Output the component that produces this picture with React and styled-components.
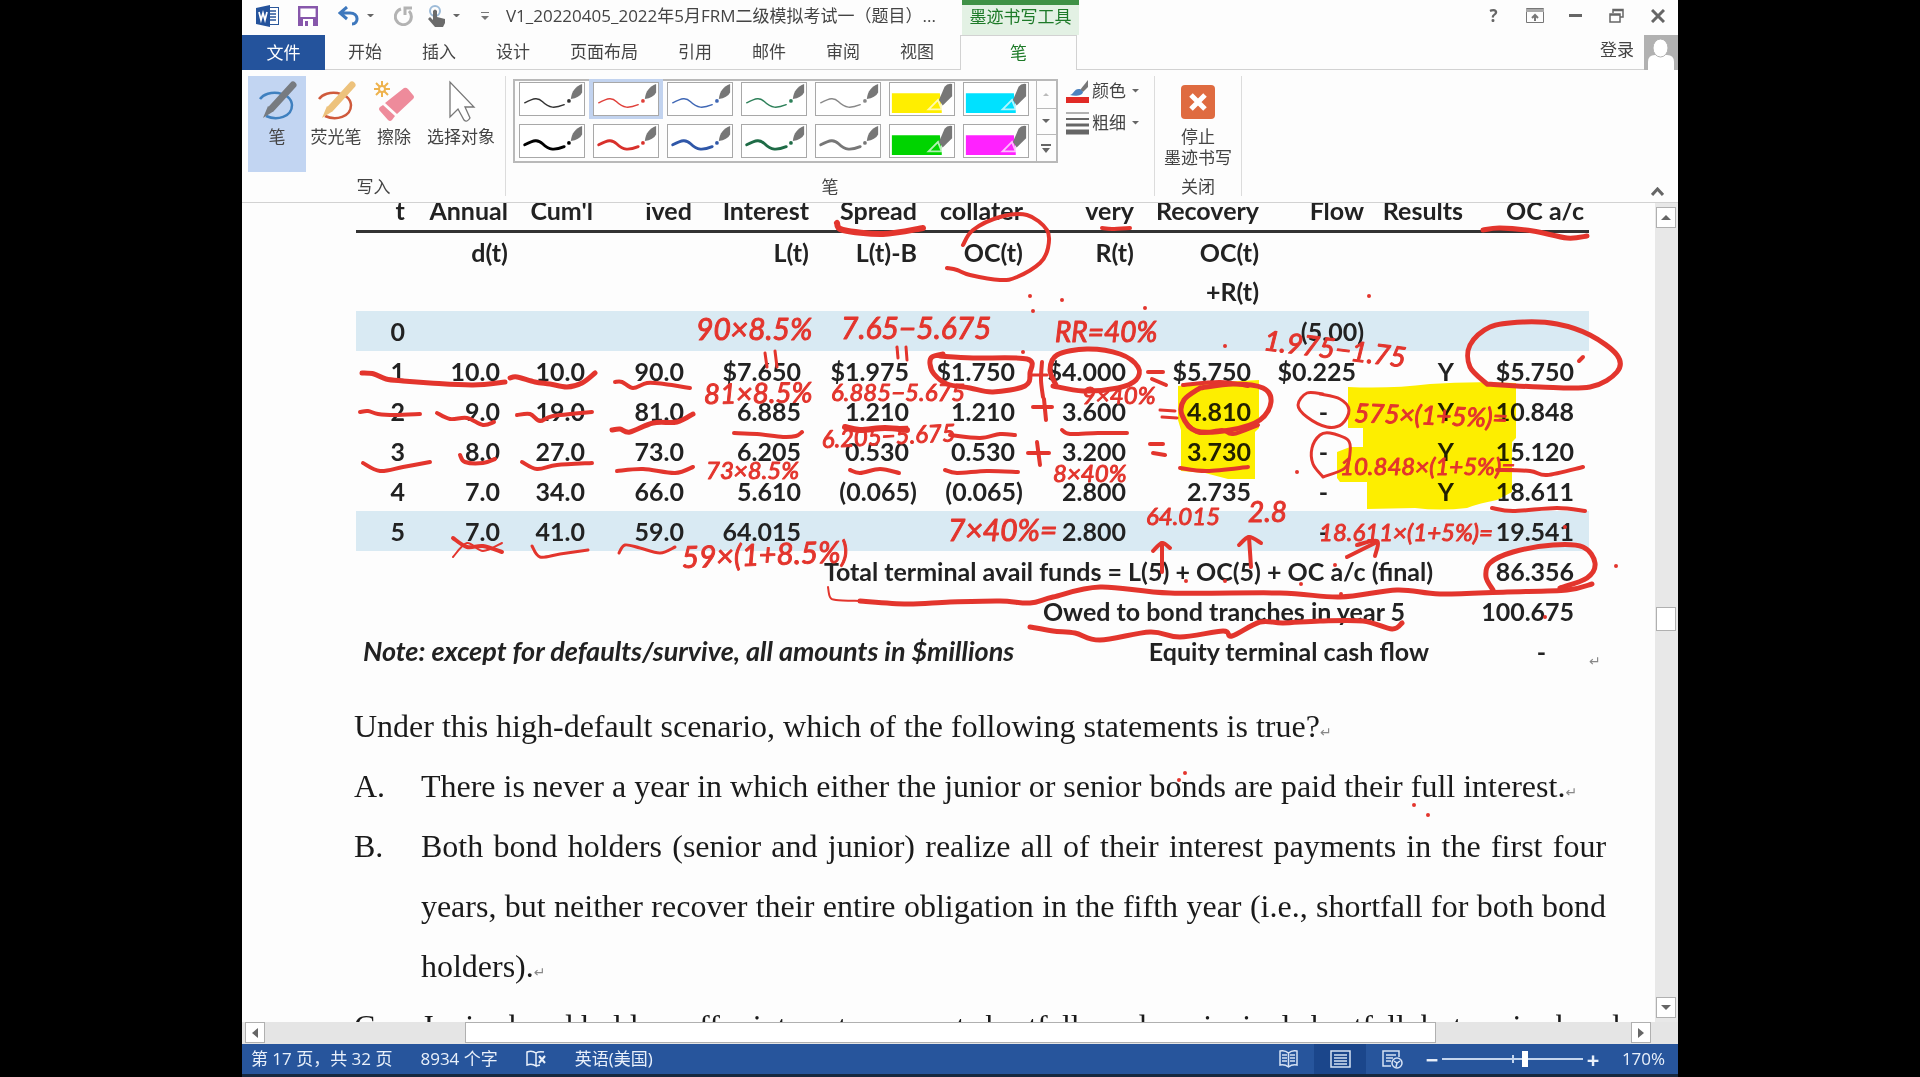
import React, { useState } from 'react';
import styled, { createGlobalStyle, css } from 'styled-components';

const GlobalStyle = createGlobalStyle`
  * {
    box-sizing: border-box;
  }
  html,
  body,
  #root {
    height: 100%;
    margin: 0;
  }
  body {
    background: #000;
    color: #444;
    font: 17px/24px 'Open Sans', 'Noto Sans CJK SC', sans-serif;
    overflow: hidden;
  }
  button {
    padding: 0;
    border: none;
    background: transparent;
    color: inherit;
    font: inherit;
    cursor: pointer;
  }
  svg {
    display: block;
  }
`;

const Screen = styled.div`
  display: flex;
  height: 100vh;
  padding: 0 12.6%;
`;

const Window = styled.div`
  display: flex;
  flex: 1;
  flex-direction: column;
  min-width: 0;
  background: #fdfdfd;
  border-bottom: 3px solid #16283f;
`;

/* ---------- title bar ---------- */

const TitleBar = styled.header`
  display: flex;
  height: 35px;
  flex: none;
`;

const QuickAccess = styled.div`
  display: flex;
  align-items: center;
  width: 720px;
  padding: 0 0 4px 14px;
`;

const QuickButton = styled.button`
  display: flex;
  align-items: center;
  justify-content: center;
  width: ${props => props.$width}px;
  height: 24px;
`;

const DocTitle = styled.span`
  margin-left: 4px;
  white-space: nowrap;
`;

const ContextTitle = styled.div`
  width: 117px;
  border-top: 5px solid #3f9146;
  background: #e3f1e4;
  color: #1d7a28;
  text-align: center;
  white-space: nowrap;
`;

const WindowButtons = styled.div`
  display: flex;
  flex: 1;
  justify-content: flex-end;
  align-items: center;
  padding-bottom: 4px;

  button {
    display: flex;
    align-items: center;
    justify-content: center;
    width: 41px;
    height: 30px;
    color: #666;
    font-weight: 700;
  }
`;

/* ---------- tabs ---------- */

const TabBar = styled.nav`
  display: flex;
  flex: none;
  height: 35px;
`;

const Tab = styled.button`
  padding: 0 20px;
  border-bottom: 1px solid #d2d2d2;
  white-space: nowrap;
`;

const FileTab = styled(Tab)`
  width: 83px;
  border-bottom: none;
  background: #24539c;
  color: #fff;
`;

const ContextTab = styled(Tab)`
  width: 117px;
  border: 1px solid #d2d2d2;
  border-bottom: none;
  color: #1d7a28;
`;

const TabGap = styled.span`
  flex: ${props => (props.$width ? `0 0 ${props.$width}px` : 1)};
  border-bottom: 1px solid #d2d2d2;
`;

const SignIn = styled.button`
  padding: 0 10px 4px 0;
  border-bottom: 1px solid #d2d2d2;
`;

/* ---------- ribbon ---------- */

const Ribbon = styled.section`
  display: flex;
  flex: none;
  height: 133px;
  border-bottom: 1px solid #d2d2d2;
`;

const Group = styled.div`
  display: flex;
  flex: none;
  flex-direction: column;
  justify-content: space-between;
  width: ${props => props.$width}px;
  margin: 6px 0;
  border-right: 1px solid #dcdcdc;
`;

const GroupBody = styled.div`
  display: flex;
  height: 97px;
  padding-left: ${props => props.$inset || 0}px;
`;

const GroupLabel = styled.div`
  text-align: center;
  line-height: 18px;
`;

const BigButton = styled.button`
  display: flex;
  flex-direction: column;
  align-items: center;
  width: ${props => props.$width}px;
  height: 96px;
  padding-top: 4px;
  line-height: 21px;
  white-space: nowrap;
  ${props => props.$active && css`background: #c2d5f2;`}

  svg {
    height: 42px;
    margin-bottom: 4px;
  }
`;

const Gallery = styled.div`
  display: flex;
  width: 545px;
  height: 84px;
  margin-top: 3px;
  border: 2px solid #b9b9b9;
`;

const Swatches = styled.div`
  display: grid;
  flex: 1;
  grid-template-columns: repeat(7, 74px);
  grid-template-rows: 40px 40px;
  row-gap: 2px;
  margin-top: -2px;
`;

const Swatch = styled.button`
  display: flex;
  align-items: center;
  justify-content: center;
  ${props => props.$active && css`background: #c2d3ef;`}

  svg {
    border: 1px solid #a8a8a8;
    background: #fff;
  }
`;

const GalleryScroll = styled.div`
  display: grid;
  width: 20px;
  grid-template-rows: repeat(3, 1fr);
  border-left: 1px solid #b9b9b9;

  button {
    display: flex;
    align-items: center;
    justify-content: center;
  }
  button + button {
    border-top: 1px solid #b9b9b9;
  }
`;

const SmallButtons = styled.div`
  display: flex;
  flex-direction: column;
  gap: 8px;
  padding: 3px 0 0 8px;
`;

const SmallButton = styled.button`
  display: flex;
  align-items: center;
  height: 24px;
  white-space: nowrap;

  svg {
    margin-right: 3px;
  }
  svg:last-child {
    margin: 0 0 0 6px;
  }
`;

const RibbonEnd = styled.div`
  display: flex;
  flex: 1;
  align-items: flex-end;
  justify-content: flex-end;
  padding: 0 14px 6px 0;
`;

/* ---------- document ---------- */

const Workspace = styled.main`
  display: flex;
  flex: 1;
  min-height: 0;
`;

const Canvas = styled.div`
  position: relative;
  flex: 1;
  min-width: 0;
  overflow: hidden;
`;

/* the page is scrolled, so its first table row is cut by the ribbon */
const Page = styled.article`
  margin-top: -12px;
  padding: 0 49px 0 112px;
  color: #1a1a1a;
`;

const TableLine = styled.div`
  display: flex;
  align-items: flex-end;
  margin-bottom: 26px;
  padding-left: 2px;
`;

const CashFlows = styled.table`
  flex: 1;
  table-layout: fixed;
  border-collapse: collapse;
  color: #222;
  font: 700 25px/38px Lato, sans-serif;
  white-space: nowrap;

  tr {
    height: 40px;
  }
  th,
  td {
    padding: 0;
    text-align: right;
  }
  thead tr:first-child th {
    border-bottom: 3px solid #333;
  }
`;

const Row = styled.tr`
  background: ${props => (props.$shaded ? '#d9eaf3' : 'transparent')};
`;

const HeadCell = styled.th`
  && {
    padding-right: ${props => (props.$last ? 5 : 0)}px;
  }
`;

const Cell = styled.td`
  && {
    padding-right: ${props => props.$pad}px;
  }
`;

const NoteCell = styled.td`
  && {
    padding-left: 7px;
    font-size: 27px;
    font-style: italic;
    text-align: left;
  }
`;

const Mark = styled.span`
  flex: none;
  width: 17px;
  color: #888;
  font: 14px/20px 'DejaVu Sans', sans-serif;
`;

const Question = styled.p`
  margin: 0;
  font: 32px/59px 'Liberation Serif', serif;
`;

const Options = styled.dl`
  display: grid;
  grid-template-columns: 67px 1fr;
  margin: 0;
  font: 32px/60px 'Liberation Serif', serif;

  dd {
    min-width: 0;
    margin: 0;
    text-align: justify;
  }
  dd:last-child {
    white-space: nowrap;
  }
`;

/* pen strokes float over the page */
const InkLayer = styled.svg`
  position: absolute;
  top: 0;
  left: 0;
  fill: none;
  stroke: #e3352d;
  stroke-linecap: round;
  stroke-linejoin: round;
  pointer-events: none;
`;

const HighlightLayer = styled(InkLayer)`
  fill: #fff000;
  stroke: none;
  mix-blend-mode: multiply;
`;

const InkText = styled.text`
  fill: #e3352d;
  stroke-width: 1px;
  font: italic ${props => props.$size}px Lato, sans-serif;
`;

/* ---------- scroll bars ---------- */

const VScroll = styled.div`
  display: flex;
  flex-direction: column;
  width: 23px;
  padding: 4px 2px 4px 1px;
  background: #e8e8e8;
`;

const HScroll = styled.div`
  display: flex;
  flex: none;
  height: 22px;
  padding: 0 27px 1px 3px;
  background: #e5e5e5;
`;

const ScrollButton = styled.button`
  display: flex;
  flex: none;
  align-items: center;
  justify-content: center;
  width: 20px;
  height: 21px;
  border: 1px solid #b0b0b0;
  background: #fff;
`;

const Spacer = styled.span`
  flex: ${props => props.$grow};
`;

const Thumb = styled.span`
  flex: ${props => props.$grow || 'none'};
  height: ${props => (props.$grow ? 21 : 24)}px;
  border: 1px solid #b0b0b0;
  background: #fff;
`;

/* ---------- status bar ---------- */

const StatusBar = styled.footer`
  display: flex;
  flex: none;
  align-items: center;
  height: 30px;
  padding: 0 13px 0 9px;
  background: #27559c;
  color: #e9f0fa;
  white-space: nowrap;
`;

const StatusItem = styled.span`
  margin-right: 28px;
`;

const ViewButton = styled.button`
  display: flex;
  align-items: center;
  justify-content: center;
  width: 52px;
  height: 30px;
  background: ${props => (props.$active ? '#1b468b' : 'transparent')};
`;

const ZoomButton = styled.button`
  width: 20px;
  font-size: 22px;
  font-weight: 700;
`;

const Zoom = styled.input`
  width: 141px;
  height: 20px;
  margin: 0;
  appearance: none;
  background: linear-gradient(#c4d5ee, #c4d5ee) 0 50% / 100% 2px no-repeat,
    linear-gradient(#c4d5ee, #c4d5ee) 50% 50% / 2px 8px no-repeat;

  &::-webkit-slider-thumb {
    width: 6px;
    height: 16px;
    appearance: none;
    background: #fff;
  }
`;

const ZoomTools = styled.div`
  display: flex;
  align-items: center;
  margin-left: 4px;
`;

const ZoomLevel = styled.output`
  width: 62px;
  text-align: right;
`;

/* ---------- icons ---------- */

const Caret = ({ up, color = '#666', size = 8 }) => (
  <svg width={size} height={size / 2} viewBox="0 0 8 4">
    <path d={up ? 'M0 4L4 0L8 4Z' : 'M0 0H8L4 4Z'} fill={color} />
  </svg>
);

const WordIcon = () => (
  <svg width="24" height="22" viewBox="0 0 24 22">
    <rect x="10.500" y="2.500" width="12" height="17" fill="#fff" stroke="#2b579a" />
    <path d="M14 6h6M14 9h6M14 12h6M14 15h6" stroke="#2b579a" strokeWidth="1.500" />
    <path d="M0 3L14 0V22L0 19Z" fill="#24539c" />
    <path d="M3 7l2 8 2-7 2 7 2-8" fill="none" stroke="#fff" strokeWidth="1.700" />
  </svg>
);

const SaveIcon = () => (
  <svg width="20" height="20" viewBox="0 0 20 20">
    <path d="M1.200 1.200H18.800V18.800H1.200Z" fill="#fff" stroke="#8757ab" strokeWidth="2.400" />
    <path d="M1 11h18v8H1z" fill="#8757ab" />
    <path d="M5 13h10v7H5z" fill="#fff" />
    <path d="M7 15h3v5H7z" fill="#8757ab" />
  </svg>
);

const UndoIcon = () => (
  <svg width="22" height="20" viewBox="0 0 22 20" fill="none" stroke="#3e78bd" strokeWidth="3">
    <path d="M9 1L2 7l7 6M3 7h9c9 0 9 11 2 11" />
  </svg>
);

const RedoIcon = () => (
  <svg width="20" height="20" viewBox="0 0 20 20" fill="none" stroke="#b3b3b3" strokeWidth="3">
    <path d="M7 3a8 8 0 1 0 8 2M11 9V2h7" />
  </svg>
);

const TouchIcon = () => (
  <svg width="18" height="22" viewBox="0 0 18 22">
    <circle cx="7" cy="6" r="5" fill="none" stroke="#9dbbd8" strokeWidth="2" />
    <path d="M5 6q2-3 4 0v6l8 2v4l-2 4H7L0 14l2-2 3 3z" fill="#6b6b6b" />
  </svg>
);

const PenIcon = ({ body, loop }) => (
  <svg width="40" height="40" viewBox="0 0 40 40" fill="none">
    <path d="M3 18C10 8 34 10 35 24C35 36 20 40 9 35" stroke={loop} strokeWidth="2.500" />
    <path d="M36 4L15 27" stroke={body} strokeWidth="7" strokeLinecap="round" />
    <path d="M11 25l6 5-11 7z" fill={body} />
  </svg>
);

const EraserIcon = () => (
  <svg width="42" height="42" viewBox="0 0 42 42">
    <path
      d="M9 1v16M1 9h16M3 3l12 12M15 3L3 15"
      stroke="#eeb34e"
      strokeWidth="2"
    />
    <circle cx="9" cy="9" r="3" fill="#fff" stroke="#eeb34e" strokeWidth="2" />
    <path d="M31 8q2-1 4 1l5 6q2 2 0 4L24 34 12 23Z" fill="#ee8b9b" />
    <path d="M10 25l12 11-3 4q-2 2-4 0L7 31q-2-2 0-4z" fill="#ee8b9b" />
  </svg>
);

const PointerIcon = () => (
  <svg width="40" height="42" viewBox="0 0 40 42">
    <path
      d="M9 2V37L17 29L23 40Q26 43 29 38L24 27H33Z"
      fill="#fff"
      stroke="#777"
      strokeWidth="1.300"
    />
  </svg>
);

const PenSwatch = ({ color, bold }) => (
  <svg width="66" height="34" viewBox="0 0 66 34">
    <path
      d="M4 21C14 16 18 15 23 20C30 27 36 27 46 23"
      fill="none"
      stroke={color}
      strokeWidth={bold ? 3 : 1.5}
      strokeLinecap="round"
    />
    <circle cx="51" cy="19" r="2" fill={color} />
    <path d="M53 17C54 8 58 4 65 1V10C63 14 59 16 53 17Z" fill="#777" />
  </svg>
);

const MarkerSwatch = ({ color }) => (
  <svg width="66" height="34" viewBox="0 0 66 34">
    <path d="M1 11H52L54 28V32H1Z" fill={color} />
    <path d="M40 28L50 18L54 28Z" fill={color} stroke="#fff" strokeOpacity="0.700" strokeWidth="2" />
    <path d="M51 18L57 4Q60 0 65 1V14L55 24Z" fill="#777" />
  </svg>
);

const ColorIcon = () => (
  <svg width="23" height="23" viewBox="0 0 23 23">
    <path d="M14 10L22 0V7L17 12Z" fill="#777" />
    <path d="M4 15C8 14 8 8 14 9L17 12C17 15 10 17 4 15Z" fill="#4c82bf" />
    <path d="M0 17h23v6H0z" fill="#e12a26" />
  </svg>
);

const WeightIcon = () => (
  <svg width="23" height="23" viewBox="0 0 23 23" stroke="#666">
    <path d="M0 1h23" />
    <path d="M0 7h23" strokeWidth="2" />
    <path d="M0 13h23" strokeWidth="3" />
    <path d="M0 20h23" strokeWidth="5" />
  </svg>
);

const StopIcon = () => (
  <svg width="34" height="42" viewBox="0 0 34 42">
    <rect y="5" width="34" height="34" rx="4" fill="#df6b40" />
    <path d="M10 15L24 29M24 15L10 29" stroke="#fff" strokeWidth="5" />
  </svg>
);

const RibbonDisplayIcon = () => (
  <svg width="18" height="15" viewBox="0 0 18 15" fill="none" stroke="#777">
    <path d="M0.500 0.500H17.500V14.500H0.500Z" />
    <path d="M0 2.500H18" strokeWidth="3" stroke="#aaa" />
    <path d="M9 13V7M6 10l3-3 3 3" strokeWidth="2" />
  </svg>
);

const RestoreIcon = () => (
  <svg width="15" height="15" viewBox="0 0 15 15" fill="none" stroke="#666" strokeWidth="1.500">
    <path d="M4 5V1.500H14V9H11M4 2.500h10" />
    <path d="M1 6H11V14H1ZM1 7h10" />
  </svg>
);

const CloseIcon = () => (
  <svg width="14" height="14" viewBox="0 0 14 14" stroke="#666" strokeWidth="3">
    <path d="M1 1L13 13M13 1L1 13" />
  </svg>
);

const Avatar = () => (
  <svg width="34" height="35" viewBox="0 0 34 35">
    <path d="M0 0H34V35H0Z" fill="#b1b1b1" />
    <path d="M4 35V27Q4 20 11 20H23Q30 20 30 27V35Z" fill="#fff" />
    <ellipse cx="16.500" cy="13" rx="7.500" ry="9" fill="#fff" stroke="#b1b1b1" />
  </svg>
);

const ProofIcon = () => (
  <svg width="21" height="18" viewBox="0 0 21 18" fill="none" stroke="#e9f0fa" strokeWidth="1.500">
    <path d="M10 3Q6 0 1 2V15Q6 13 10 16V3Q13 1 18 2M10 16l4-1" />
    <path d="M13 6l6 7M19 6l-6 7" strokeWidth="2" />
  </svg>
);

const ReadIcon = () => (
  <svg width="19" height="18" viewBox="0 0 19 18" fill="none" stroke="#d6e2f4" strokeWidth="1.500">
    <path d="M9.500 3Q6 0 1 1V15Q6 14 9.500 17Q13 14 18 15V1Q13 0 9.500 3V17M3 5h5M3 8h5M3 11h5M11 5h5M11 8h5M11 11h5" />
  </svg>
);

const PrintIcon = () => (
  <svg width="21" height="18" viewBox="0 0 21 18" fill="none" stroke="#d6e2f4" strokeWidth="1.500">
    <path d="M1 1H20V17H1ZM4 5h13M4 8h13M4 11h13M4 14h13" />
  </svg>
);

const WebIcon = () => (
  <svg width="21" height="19" viewBox="0 0 21 19" fill="none" stroke="#d6e2f4" strokeWidth="1.500">
    <path d="M9 16H1V1H17V7M4 5h10M4 8h7M4 11h5" />
    <circle cx="15" cy="13" r="5" />
    <path d="M12 11l3 2 3-2M15 13l-1 4" />
  </svg>
);

/* ---------- data ---------- */

const TABS = ['开始', '插入', '设计', '页面布局', '引用', '邮件', '审阅', '视图'];

const PENS = [
  { color: '#333' },
  { color: '#e0403a' },
  { color: '#3f67b5' },
  { color: '#2d8059' },
  { color: '#888' },
  { color: '#ffee00', marker: true },
  { color: '#00e1ff', marker: true },
  { color: '#000', bold: true },
  { color: '#d8302b', bold: true },
  { color: '#2f57a8', bold: true },
  { color: '#1e6b46', bold: true },
  { color: '#777', bold: true },
  { color: '#00d400', marker: true },
  { color: '#ff22ff', marker: true },
];

const COLUMNS = [49, 103, 85, 99, 117, 108, 106, 111, 125, 105, 99, 126];

const HEAD = [
  ['t', 'Annual', "Cum'l", 'ived', 'Interest', 'Spread', 'collater', 'very', 'Recovery', 'Flow', 'Results', 'OC a/c'],
  ['', 'd(t)', '', '', 'L(t)', 'L(t)-B', 'OC(t)', 'R(t)', 'OC(t)', '', '', ''],
  ['', '', '', '', '', '', '', '', '+R(t)', '', '', ''],
];

const ROWS = [
  ['0', '', '', '', '', '', '', '', '', '(5.00)', '', ''],
  ['1', '10.0', '10.0', '90.0', '$7.650', '$1.975', '$1.750', '$4.000', '$5.750', '$0.225', 'Y', '$5.750'],
  ['2', '9.0', '19.0', '81.0', '6.885', '1.210', '1.210', '3.600', '4.810', '-', 'Y', '10.848'],
  ['3', '8.0', '27.0', '73.0', '6.205', '0.530', '0.530', '3.200', '3.730', '-', 'Y', '15.120'],
  ['4', '7.0', '34.0', '66.0', '5.610', '(0.065)', '(0.065)', '2.800', '2.735', '-', 'Y', '18.611'],
  ['5', '7.0', '41.0', '59.0', '64.015', '', '', '2.800', '', '-', '', '19.541'],
];

// brackets hang in the space that is kept right of a positive number
const cellPad = (text, col) => {
  if (col === 0) return 0;
  if (text === '-') return 36;
  const pad = text.endsWith(')') ? 0 : 8;
  return col === 11 ? pad + 7 : pad;
};

const INK = [
  // underlines of the default columns
  { w: 5, p: [362, 373, 374, 374, 386, 379, 403, 381, 430, 383, 473, 385, 505, 382] },
  { w: 5, p: [510, 378, 517, 377, 535, 382, 550, 384, 567, 387, 582, 383, 595, 373] },
  { w: 4, p: [615, 382, 622, 382, 633, 388, 647, 383, 664, 384, 690, 388] },
  { w: 4, p: [360, 412, 368, 411, 378, 414, 395, 415, 420, 414] },
  { w: 4, p: [437, 413, 450, 419, 467, 418, 483, 425, 494, 422] },
  { w: 4, p: [517, 415, 530, 414, 540, 421, 553, 416, 592, 412] },
  { w: 5, p: [612, 430, 620, 429, 630, 432, 653, 423, 677, 422, 693, 414] },
  { w: 4, p: [734, 433, 757, 434, 783, 437, 796, 436, 802, 432] },
  { w: 4, p: [363, 463, 380, 471, 403, 467, 430, 462] },
  { w: 4, p: [460, 455, 465, 462, 483, 463, 495, 459] },
  { w: 4, p: [522, 462, 537, 469, 557, 465, 592, 463] },
  { w: 4, p: [617, 471, 643, 469, 675, 473, 693, 467] },
  { w: 4, p: [453, 538, 467, 547, 483, 546, 502, 552] },
  { w: 2, p: [453, 557, 467, 543, 483, 551, 502, 543] },
  { w: 3, p: [532, 546, 540, 557, 560, 554, 588, 550] },
  { w: 3, p: [619, 553, 625, 545, 640, 548, 660, 553, 675, 547] },
  // header marks
  { w: 6, p: [837, 223, 843, 230, 883, 234, 923, 228] },
  { w: 4, p: [963, 245, 973, 230, 1000, 217, 1027, 215, 1047, 230, 1048, 248, 1040, 263, 1017, 277, 1000, 280, 970, 275, 957, 270, 947, 268] },
  { w: 4, p: [1102, 228, 1112, 229, 1130, 228] },
  { w: 5, p: [1483, 230, 1500, 228, 1533, 231, 1567, 238, 1587, 236] },
  // row 1
  { w: 5, p: [943, 354, 932, 357, 930, 364, 934, 374, 947, 384, 970, 388, 993, 392, 1025, 386, 1030, 373, 1027, 359, 973, 358, 940, 356] },
  { w: 3, p: [1030, 375, 1047, 375] },
  { w: 4, p: [1042, 362, 1041, 380, 1043, 397] },
  { w: 5, p: [1056, 385, 1050, 370, 1057, 355, 1087, 349, 1120, 354, 1138, 367, 1136, 380, 1118, 388, 1083, 391, 1053, 386] },
  { w: 4, p: [1148, 372, 1163, 372] },
  { w: 4, p: [1152, 379, 1166, 385] },
  { w: 4, p: [1183, 385, 1220, 382, 1248, 386] },
  { w: 3, p: [765, 353, 767, 367] },
  { w: 3, p: [775, 351, 777, 367] },
  { w: 3, p: [897, 347, 898, 358] },
  { w: 3, p: [906, 347, 907, 360] },
  { w: 5, p: [1487, 384, 1470, 367, 1470, 345, 1490, 327, 1523, 322, 1557, 324, 1590, 335, 1617, 355, 1617, 372, 1590, 387, 1540, 387, 1487, 384] },
  { w: 4, p: [1579, 361, 1583, 357] },
  // row 2
  { w: 4, p: [1033, 407, 1052, 407] },
  { w: 4, p: [1044, 399, 1046, 420] },
  { w: 3, p: [1160, 410, 1175, 411] },
  { w: 3, p: [1162, 417, 1177, 418] },
  { w: 5, p: [1200, 388, 1184, 400, 1182, 415, 1196, 431, 1230, 430, 1260, 420, 1271, 402, 1263, 388, 1233, 384, 1200, 388] },
  { w: 4, p: [1187, 424, 1200, 433, 1222, 430, 1233, 434, 1258, 425] },
  { w: 3, p: [1323, 394, 1307, 393, 1298, 405, 1307, 417, 1327, 427, 1342, 424, 1349, 410, 1340, 399, 1320, 394] },
  { w: 6, p: [845, 427, 860, 430, 885, 428, 907, 430] },
  { w: 4, p: [950, 435, 980, 438, 1000, 434, 1015, 435] },
  { w: 4, p: [1062, 430, 1070, 434, 1098, 433, 1127, 433] },
  // row 3
  { w: 4, p: [1028, 453, 1049, 453] },
  { w: 4, p: [1037, 442, 1040, 465] },
  { w: 4, p: [1150, 444, 1163, 444] },
  { w: 4, p: [1153, 453, 1165, 455] },
  { w: 4, p: [850, 470, 860, 473, 880, 469, 899, 473] },
  { w: 4, p: [945, 470, 957, 473, 987, 471, 1018, 472] },
  { w: 4, p: [1180, 468, 1207, 471, 1248, 467] },
  { w: 3, p: [1323, 477, 1313, 464, 1312, 448, 1320, 435, 1330, 433, 1348, 440, 1350, 453, 1345, 468, 1323, 477] },
  { w: 4, p: [1497, 470, 1530, 471, 1547, 475, 1583, 467] },
  { w: 4, p: [1492, 508, 1513, 511, 1557, 508, 1585, 511] },
  // arrows
  { w: 4, p: [1162, 572, 1162, 543] },
  { w: 4, p: [1153, 551, 1162, 543, 1170, 548] },
  { w: 4, p: [1251, 567, 1249, 537] },
  { w: 4, p: [1239, 545, 1249, 537, 1261, 543] },
  { w: 4, p: [1347, 557, 1377, 542] },
  { w: 4, p: [1357, 545, 1377, 541, 1375, 556] },
  // totals
  { w: 5, p: [1493, 590, 1486, 577, 1490, 563, 1513, 552, 1553, 545, 1583, 547, 1595, 563, 1587, 578, 1560, 588] },
  { w: 2, p: [828, 587, 830, 597, 836, 600, 860, 601] },
  { w: 5, p: [860, 601, 907, 604, 950, 602, 1000, 601, 1030, 603, 1053, 597, 1100, 587, 1170, 593, 1280, 593, 1340, 597, 1397, 590, 1440, 594, 1507, 592, 1567, 590, 1592, 584] },
  { w: 5, p: [1030, 627, 1053, 631, 1075, 633, 1100, 640, 1150, 632, 1180, 637, 1223, 631, 1232, 636, 1260, 622, 1283, 623, 1320, 621, 1363, 621, 1392, 629, 1402, 623] },
];

const DOTS = [
  [1030, 296], [1033, 311], [1062, 300], [1145, 308], [1225, 346], [1023, 352], [1369, 296],
  [1616, 566], [1301, 584], [1341, 594], [1297, 472], [1565, 527], [1186, 581], [1225, 581],
  [1335, 565], [1545, 617], [1179, 780], [1185, 773], [1414, 805], [1428, 815],
];

const WRITING = [
  { x: 696, y: 340, size: 30, text: '90×8.5%' },
  { x: 841, y: 339, size: 30, text: '7.65−5.675' },
  { x: 1055, y: 342, size: 28, text: 'RR=40%' },
  { x: 1263, y: 350, size: 28, turn: 7, text: '1.975−1.75' },
  { x: 704, y: 404, size: 28, turn: -1, text: '81×8.5%' },
  { x: 831, y: 401, size: 24, text: '6.885−5.675' },
  { x: 1082, y: 404, size: 24, text: '9×40%' },
  { x: 822, y: 448, size: 24, turn: -3, text: '6.205−5.675' },
  { x: 706, y: 479, size: 24, text: '73×8.5%' },
  { x: 1053, y: 482, size: 24, text: '8×40%' },
  { x: 948, y: 541, size: 30, text: '7×40%=' },
  { x: 1146, y: 525, size: 24, text: '64.015' },
  { x: 1248, y: 522, size: 28, text: '2.8' },
  { x: 1354, y: 422, size: 26, turn: 2, text: '575×(1+5%)=' },
  { x: 1340, y: 475, size: 24, text: '10.848×(1+5%)=' },
  { x: 1319, y: 541, size: 24, text: '18.611×(1+5%)=' },
  { x: 682, y: 568, size: 30, turn: -2, text: '59×(1+8.5%)' },
];

// one smooth curve through a flat list of points
const smooth = flat => {
  const pts = [];
  for (let i = 0; i < flat.length; i += 2) pts.push([flat[i], flat[i + 1]]);
  let d = `M${pts[0]}`;
  for (let i = 0; i < pts.length - 1; i++) {
    const a = pts[i - 1] || pts[i];
    const b = pts[i];
    const c = pts[i + 1];
    const e = pts[i + 2] || c;
    d += `C${b[0] + (c[0] - a[0]) / 6},${b[1] + (c[1] - a[1]) / 6} ${c[0] - (e[0] - b[0]) / 6},${c[1] - (e[1] - b[1]) / 6} ${c}`;
  }
  return d;
};

/* ---------- parts ---------- */

const Ink = () => {
  const frame = { width: 1413, height: 820, viewBox: '242 203 1413 820' };
  return (
    <>
      <HighlightLayer {...frame}>
        <path d="M1178 386L1200 383L1259 380V428L1255 432V479H1228L1205 473L1181 471V430L1178 420Z" />
        <path d="M1348 387Q1390 389 1430 384Q1470 381 1516 383V438L1512 442V492L1497 500Q1480 503 1467 508Q1440 511 1415 508L1367 509V482H1340L1337 478V452L1350 447H1363V428H1348Z" />
      </HighlightLayer>
      <InkLayer {...frame}>
        {INK.map((stroke, i) => (
          <path key={i} d={smooth(stroke.p)} strokeWidth={stroke.w} />
        ))}
        {DOTS.map(([x, y], i) => (
          <circle key={i} cx={x} cy={y} r="1" strokeWidth="2" />
        ))}
        {WRITING.map(line => (
          <InkText
            key={line.text}
            $size={line.size}
            x={line.x}
            y={line.y}
            transform={line.turn ? `rotate(${line.turn} ${line.x} ${line.y})` : undefined}
          >
            {line.text}
          </InkText>
        ))}
      </InkLayer>
    </>
  );
};

const CashFlowTable = () => (
  <CashFlows>
    <colgroup>
      {COLUMNS.map((width, i) => (
        <col key={i} width={width} />
      ))}
    </colgroup>
    <thead>
      {HEAD.map((cells, r) => (
        <tr key={r}>
          {cells.map((text, c) => (
            <HeadCell key={c} $last={c === 11}>{text}</HeadCell>
          ))}
        </tr>
      ))}
    </thead>
    <tbody>
      {ROWS.map((cells, r) => (
        <Row key={r} $shaded={r === 0 || r === 5}>
          {cells.map((text, c) => (
            <Cell key={c} $pad={c === 10 ? 9 : cellPad(text, c)}>{text}</Cell>
          ))}
        </Row>
      ))}
      <Row>
        <Cell colSpan={11} $pad={30}>Total terminal avail funds = L(5) + OC(5) + OC a/c (final)</Cell>
        <Cell $pad={15}>86.356</Cell>
      </Row>
      <Row>
        <Cell colSpan={11} $pad={58}>Owed to bond tranches in year 5</Cell>
        <Cell $pad={15}>100.675</Cell>
      </Row>
      <Row>
        <NoteCell colSpan={7}>Note: except for defaults/survive, all amounts in $millions</NoteCell>
        <Cell colSpan={4} $pad={34}>Equity terminal cash flow</Cell>
        <Cell $pad={43}>-</Cell>
      </Row>
    </tbody>
  </CashFlows>
);

const PenRibbon = () => {
  const [pen, setPen] = useState(1);

  return (
    <Ribbon>
      <Group $width={264}>
        <GroupBody $inset={6}>
          <BigButton $width={58} $active><PenIcon body="#777b80" loop="#3f80bf" />笔</BigButton>
          <BigButton $width={60}><PenIcon body="#edc27c" loop="#cf5a3c" />荧光笔</BigButton>
          <BigButton $width={56}><EraserIcon />擦除</BigButton>
          <BigButton $width={78}><PointerIcon />选择对象</BigButton>
        </GroupBody>
        <GroupLabel>写入</GroupLabel>
      </Group>
      <Group $width={649}>
        <GroupBody $inset={7}>
          <Gallery>
            <Swatches>
              {PENS.map((item, i) => (
                <Swatch key={i} $active={i === pen} onClick={() => setPen(i)} aria-label={`pen ${i + 1}`}>
                  {item.marker ? <MarkerSwatch color={item.color} /> : <PenSwatch {...item} />}
                </Swatch>
              ))}
            </Swatches>
            <GalleryScroll>
              <button aria-label="上一行"><Caret up color="#bbb" size={6} /></button>
              <button aria-label="下一行"><Caret /></button>
              <button aria-label="更多">
                <svg width="10" height="9" viewBox="0 0 10 9">
                  <path d="M0 0H10V2H0ZM1 4H9L5 9Z" fill="#666" />
                </svg>
              </button>
            </GalleryScroll>
          </Gallery>
          <SmallButtons>
            <SmallButton><ColorIcon />颜色<Caret size={7} /></SmallButton>
            <SmallButton><WeightIcon />粗细<Caret size={7} /></SmallButton>
          </SmallButtons>
        </GroupBody>
        <GroupLabel>笔</GroupLabel>
      </Group>
      <Group $width={87}>
        <GroupBody>
          <BigButton $width={86}>
            <StopIcon />
            <span>停止<br />墨迹书写</span>
          </BigButton>
        </GroupBody>
        <GroupLabel>关闭</GroupLabel>
      </Group>
      <RibbonEnd>
        <button aria-label="折叠功能区">
          <svg width="13" height="9" viewBox="0 0 13 9" fill="none" stroke="#666" strokeWidth="3">
            <path d="M1 8L6.500 2L12 8" />
          </svg>
        </button>
      </RibbonEnd>
    </Ribbon>
  );
};

const App = () => {
  const [zoom, setZoom] = useState(59);

  return (
    <Screen>
      <GlobalStyle />
      <Window>
        <TitleBar>
          <QuickAccess>
            <WordIcon />
            <QuickButton $width={56} aria-label="保存"><SaveIcon /></QuickButton>
            <QuickButton $width={26} aria-label="撤消"><UndoIcon /></QuickButton>
            <QuickButton $width={18} aria-label="撤消列表"><Caret size={7} /></QuickButton>
            <QuickButton $width={48} aria-label="重复"><RedoIcon /></QuickButton>
            <QuickButton $width={18} aria-label="触摸模式"><TouchIcon /></QuickButton>
            <QuickButton $width={22} aria-label="触摸列表"><Caret size={7} /></QuickButton>
            <QuickButton $width={34} aria-label="自定义">
              <svg width="8" height="8" viewBox="0 0 8 8">
                <path d="M0 0H8V1H0ZM0 4H8L4 8Z" fill="#777" />
              </svg>
            </QuickButton>
            <DocTitle>V1_20220405_2022年5月FRM二级模拟考试一（题目）...</DocTitle>
          </QuickAccess>
          <ContextTitle>墨迹书写工具</ContextTitle>
          <WindowButtons>
            <button>?</button>
            <button aria-label="功能区显示选项"><RibbonDisplayIcon /></button>
            <button aria-label="最小化">
              <svg width="13" height="3" viewBox="0 0 13 3"><path d="M0 0H13V3H0Z" fill="#666" /></svg>
            </button>
            <button aria-label="还原"><RestoreIcon /></button>
            <button aria-label="关闭"><CloseIcon /></button>
          </WindowButtons>
        </TitleBar>

        <TabBar>
          <FileTab>文件</FileTab>
          <TabGap $width={3} />
          {TABS.map(name => (
            <Tab key={name}>{name}</Tab>
          ))}
          <TabGap $width={6} />
          <ContextTab>笔</ContextTab>
          <TabGap />
          <SignIn>登录</SignIn>
          <Avatar />
        </TabBar>

        <PenRibbon />

        <Workspace>
          <Canvas>
            <Page>
              <TableLine>
                <CashFlowTable />
                <Mark>↵</Mark>
              </TableLine>
              <Question>
                Under this high-default scenario, which of the following statements is true?<Mark>↵</Mark>
              </Question>
              <Options>
                <dt>A.</dt>
                <dd>
                  There is never a year in which either the junior or senior bonds are paid their full interest.
                  <Mark>↵</Mark>
                </dd>
                <dt>B.</dt>
                <dd>
                  Both bond holders (senior and junior) realize all of their interest payments in the first four
                  years, but neither recover their entire obligation in the fifth year (i.e., shortfall for both bond
                  holders).<Mark>↵</Mark>
                </dd>
                <dt>C.</dt>
                <dd>
                  Junior bond holder suffer interest payment shortfalls and a principal shortfall, but senior bond
                </dd>
              </Options>
            </Page>
            <Ink />
          </Canvas>
          <VScroll>
            <ScrollButton aria-label="向上滚动"><Caret up size={10} /></ScrollButton>
            <Spacer $grow={380} />
            <Thumb />
            <Spacer $grow={367} />
            <ScrollButton aria-label="向下滚动"><Caret size={10} /></ScrollButton>
          </VScroll>
        </Workspace>

        <HScroll>
          <ScrollButton aria-label="向左滚动">
            <svg width="6" height="10" viewBox="0 0 6 10"><path d="M6 0V10L0 5Z" fill="#666" /></svg>
          </ScrollButton>
          <Spacer $grow={200} />
          <Thumb $grow={970} />
          <Spacer $grow={195} />
          <ScrollButton aria-label="向右滚动">
            <svg width="6" height="10" viewBox="0 0 6 10"><path d="M0 0V10L6 5Z" fill="#666" /></svg>
          </ScrollButton>
        </HScroll>

        <StatusBar>
          <StatusItem>第 17 页，共 32 页</StatusItem>
          <StatusItem>8934 个字</StatusItem>
          <StatusItem><ProofIcon /></StatusItem>
          <StatusItem>英语(美国)</StatusItem>
          <Spacer $grow={1} />
          <ViewButton aria-label="阅读视图"><ReadIcon /></ViewButton>
          <ViewButton aria-label="页面视图" $active><PrintIcon /></ViewButton>
          <ViewButton aria-label="Web 版式视图"><WebIcon /></ViewButton>
          <ZoomTools>
            <ZoomButton aria-label="缩小" onClick={() => setZoom(zoom - 1)}>−</ZoomButton>
            <Zoom
              type="range"
              aria-label="缩放"
              min="0"
              max="100"
              value={zoom}
              onChange={e => setZoom(Number(e.target.value))}
            />
            <ZoomButton aria-label="放大" onClick={() => setZoom(zoom + 1)}>+</ZoomButton>
            <ZoomLevel>170%</ZoomLevel>
          </ZoomTools>
        </StatusBar>
      </Window>
    </Screen>
  );
};

export default App;
